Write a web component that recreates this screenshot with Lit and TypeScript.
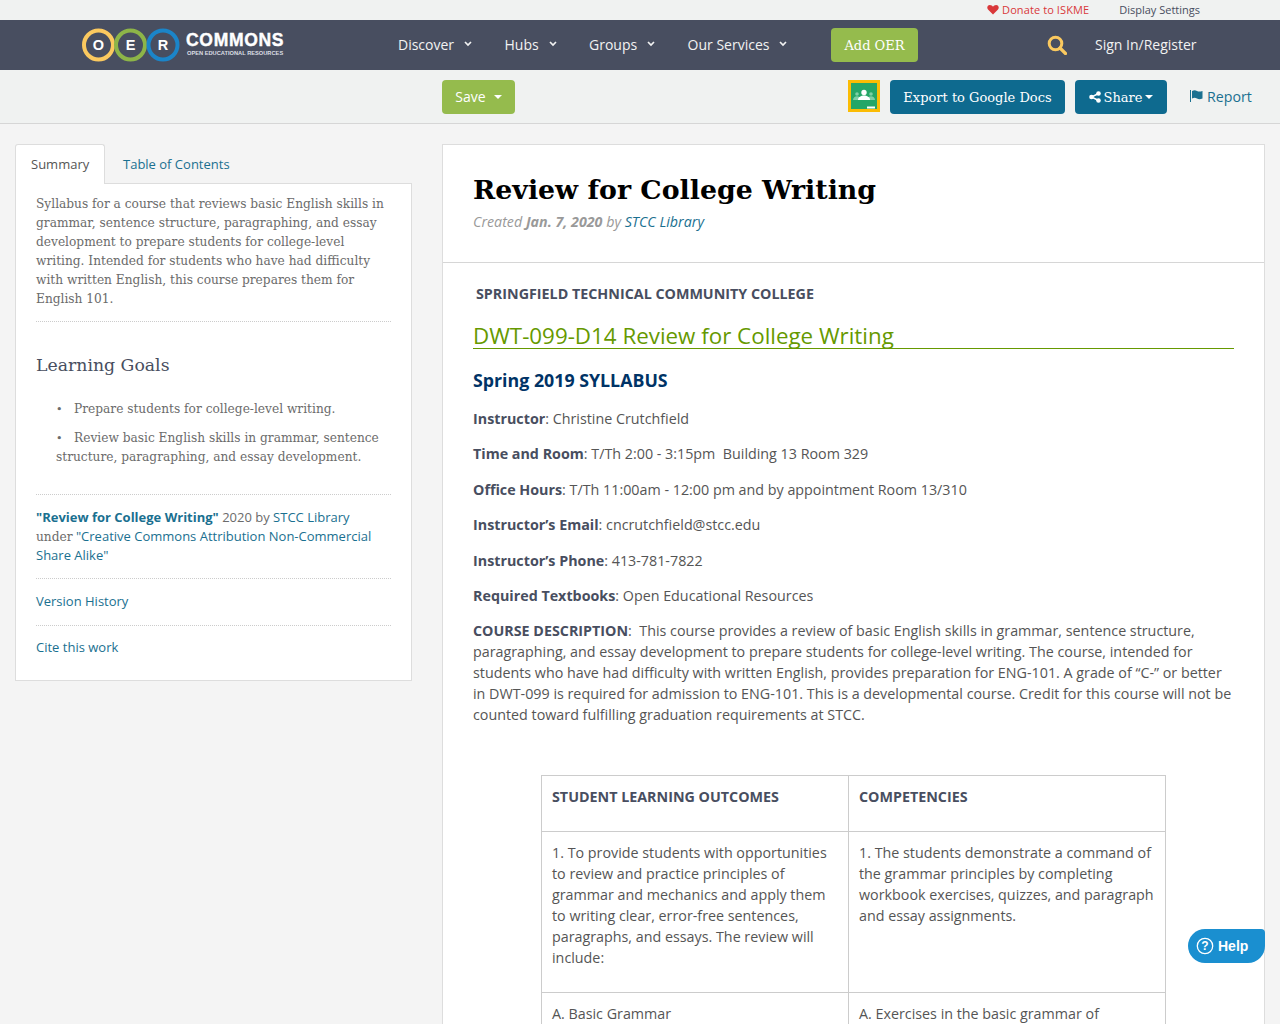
import { LitElement, css, html, svg } from "lit";
import { customElement } from "lit/decorators.js";

const chevron = html`<svg class="chev" width="8" height="6" viewBox="0 0 8 6"><path d="M1 1l3 3 3-3" fill="none" stroke="currentColor" stroke-width="1.7"/></svg>`;
const caret = html`<svg class="caret" width="8" height="4" viewBox="0 0 8 4"><path d="M0 0h8L4 4z" fill="currentColor"/></svg>`;

const ring = (cx: number, color: string, letter: string) => svg`
  <circle cx=${cx} cy="17" r="14.500" fill="none" stroke=${color} stroke-width="4"/>
  <text x=${cx} y="22" text-anchor="middle" class="ring-letter">${letter}</text>`;

@customElement("app-root")
export class AppRoot extends LitElement {
  static styles = css`
    :host {
      display: block;
      height: 1024px;
      overflow: hidden;
      position: relative;
      background: #f4f4f4;
      font-family: "Open Sans", sans-serif;
      font-size: 14px;
      line-height: 21px;
      color: #555;
    }
    a { color: #1a7090; text-decoration: none; }

    .util {
      height: 20px;
      box-sizing: border-box;
      padding: 0 80px 2px 0;
      background: #f0f2f1;
      display: flex;
      justify-content: flex-end;
      align-items: center;
      gap: 30px;
      font-size: 11px;
      color: #484e60;
    }
    .donate { color: #d9383a; display: flex; align-items: center; gap: 3px; letter-spacing: 0.1px; }

    .nav {
      height: 50px;
      background: #484e60;
      color: #f2f2f2;
      display: flex;
      align-items: center;
      padding-left: 82px;
    }
    .logo { display: flex; align-items: center; gap: 6px; width: 316px; }
    .ring-letter { font: bold 14.5px "Liberation Sans", sans-serif; fill: #fff; }
    .wordmark { display: flex; flex-direction: column; font-family: "Liberation Sans", sans-serif; font-weight: bold; color: #fff; }
    .wordmark b { font-size: 17.5px; line-height: 17px; letter-spacing: 0.7px; -webkit-text-stroke: 0.4px #fff; }
    .wordmark span { font-size: 5.7px; line-height: 9px; margin-left: 1px; white-space: nowrap; color: #dcdfe4; }
    .menu { display: flex; align-items: center; gap: 32.4px; width: 433px; padding-bottom: 2px; box-sizing: border-box; }
    .menu span { display: flex; align-items: center; gap: 10px; }
    .add {
      background: #95bb4d;
      color: #fff;
      border-radius: 4px;
      width: 87px;
      height: 34px;
      display: flex;
      align-items: center;
      justify-content: center;
      font-family: "DejaVu Serif", serif;
      font-size: 13px;
    }
    .search { margin-left: 129px; display: block; }
    .sign { margin-left: 28px; padding-bottom: 2px; }

    .toolbar {
      height: 54px;
      box-sizing: border-box;
      background: #f0f2f1;
      border-bottom: 1px solid #d6d6d6;
      display: flex;
      align-items: flex-start;
      padding: 10px 28px 0 442px;
    }
    .btn {
      height: 34px;
      border-radius: 4px;
      color: #fff;
      display: flex;
      align-items: center;
      justify-content: center;
      font-family: "DejaVu Serif", serif;
      font-size: 13px;
      white-space: nowrap;
    }
    .save { background: #95bb4d; width: 73px; gap: 8px; font-family: "Open Sans", sans-serif; font-size: 14px; padding-bottom: 2px; box-sizing: border-box; }
    .save .caret { margin-top: 2px; }
    .classroom { margin-left: auto; display: block; }
    .blue { background: #0e6a8f; }
    .export { width: 175px; margin-left: 10px; }
    .share { width: 92px; margin-left: 10px; gap: 3px; }
    .report { margin-left: 23px; height: 34px; padding-bottom: 2px; box-sizing: border-box; display: flex; align-items: center; gap: 3px; width: 62px; white-space: nowrap; font-size: 14.2px; }

    .page { display: flex; align-items: flex-start; gap: 30px; padding: 20px 15px; }
    aside { width: 397px; flex: none; font-size: 13px; line-height: 19px; }
    .tabs { display: flex; height: 40px; }
    .tab { height: 40px; display: flex; align-items: center; padding: 0 15px; box-sizing: border-box; margin-right: 3px; }
    .tab.on { background: #fff; border: 1px solid #ddd; border-bottom: 0; border-radius: 3px 3px 0 0; color: #555; width: 90px; position: relative; z-index: 1; }
    .panel { background: #fff; border: 1px solid #ddd; margin-top: -1px; padding: 11px 20px 23px; color: #6b6b6b; }
    .slab { font-family: "DejaVu Serif", serif; font-size: 12.2px; line-height: 19px; }
    .panel hr { border: 0; border-top: 1px dotted #ccc; margin: 0; }
    .desc { margin: 0 0 12px; }
    .panel h2 { font: 400 17.3px/24px "DejaVu Serif", serif; color: #484e60; margin: 31px 0 23px; }
    .panel ul { list-style: none; margin: 0 0 27px; padding: 0 0 0 20px; }
    .panel li { margin-bottom: 10px; }
    .panel li::before { content: "•"; display: inline-block; width: 18px; font-size: 11px; }
    .meta { margin: 13px 0 13px; }
    .meta .slab { line-height: 1; }
    .panel .link { margin: 13px 0 14px; }
    .panel .link:last-child { margin: 12px 0 0; }

    main { flex: 1; background: #fff; border: 1px solid #ddd; min-width: 0; }
    header { padding: 29px 30px 0; border-bottom: 1px solid #d6d6d6; height: 88px; }
    h1 { font: bold 26.8px/32px "DejaVu Serif", serif; color: #000; margin: 0; white-space: nowrap; }
    .created { font-style: italic; color: #999; margin-top: 5px; font-size: 14.25px; }
    .created b { color: #999; }
    .content { padding: 20px 30px 0; color: #555; font-size: 14.3px; }
    .content p { margin: 0 0 14.4px; }
    .content b { color: #484e60; }
    .college { padding-left: 3px; margin-bottom: 20px !important; }
    .content h2 { font-size: 22.35px; line-height: 24px; font-weight: 400; color: #669900; border-bottom: 1px solid #669900; margin: 0 0 19px; height: 24px; }
    .content h3 { font-size: 17.8px; line-height: 24px; font-weight: 700; color: #003366; margin: 0 0 16px; }
    .spacer { height: 35.4px; }
    table { border-collapse: collapse; width: 625px; margin-left: 68px; table-layout: fixed; }
    td { border: 1px solid #ccc; padding: 10px; vertical-align: top; }
    td p { margin-bottom: 14px !important; }
    td:first-child { width: 286px; }

    .help {
      position: absolute;
      left: 1188px;
      top: 929px;
      width: 77px;
      height: 34px;
      box-sizing: border-box;
      background: #1a8fd0;
      border-radius: 17px 4px 17px 17px;
      color: #fff;
      display: flex;
      align-items: center;
      gap: 3px;
      padding: 0 0 1px 7px;
      font: bold 14px "Liberation Sans", sans-serif;
    }
  `;

  render() {
    return html`
      <div class="util">
        <span class="donate">
          <svg width="12" height="11" viewBox="0 0 12 11"><path d="M6 10.500L1 5.600C-.4 4 .2 1 2.900 1 4.300 1 5.300 1.800 6 2.800 6.700 1.800 7.700 1 9.100 1c2.700 0 3.300 3 1.900 4.600z" fill="#d9383a"/></svg>
          Donate to ISKME
        </span>
        <span>Display Settings</span>
      </div>

      <div class="nav">
        <div class="logo">
          <svg width="98" height="34" viewBox="0 0 98 34">
            ${ring(16.5, "#fbc95f", "O")}${ring(48.5, "#8db548", "E")}${ring(81, "#1b85c9", "R")}
          </svg>
          <div class="wordmark"><b>COMMONS</b><span>OPEN EDUCATIONAL RESOURCES</span></div>
        </div>
        <div class="menu">
          <span>Discover ${chevron}</span>
          <span>Hubs ${chevron}</span>
          <span>Groups ${chevron}</span>
          <span>Our Services ${chevron}</span>
        </div>
        <div class="add">Add OER</div>
        <svg class="search" width="20" height="20" viewBox="0 0 20 20"><circle cx="8.500" cy="8.500" r="6.300" fill="none" stroke="#fbc95f" stroke-width="3"/><path d="M13 13l5.500 5.500" stroke="#fbc95f" stroke-width="3.200" stroke-linecap="round"/></svg>
        <span class="sign">Sign In/Register</span>
      </div>

      <div class="toolbar">
        <div class="btn save">Save ${caret}</div>
        <svg class="classroom" width="32" height="32" viewBox="0 0 32 32">
          <rect width="32" height="32" fill="#fbbc04"/>
          <rect x="3" y="3" width="26" height="26" fill="#25a667"/>
          <circle cx="9" cy="14" r="1.800" fill="#7fcfa6"/><circle cx="23" cy="14" r="1.800" fill="#7fcfa6"/>
          <path d="M5 20c0-2.500 2-3.800 4-3.800s4 1.300 4 3.800zM19 20c0-2.500 2-3.800 4-3.800s4 1.300 4 3.800z" fill="#7fcfa6"/>
          <circle cx="16" cy="12.500" r="2.700" fill="#fff"/>
          <path d="M10 20c0-3 3-4.500 6-4.500s6 1.500 6 4.500z" fill="#fff"/>
          <rect x="19" y="26.500" width="8" height="2" fill="#fff"/>
        </svg>
        <div class="btn blue export">Export to Google Docs</div>
        <div class="btn blue share">
          <svg width="12" height="12" viewBox="0 0 12 12"><path d="M9.500 2.500L2.500 6l7 3.500" fill="none" stroke="#fff" stroke-width="1.400"/><circle cx="9.500" cy="2.500" r="2.300" fill="#fff"/><circle cx="2.500" cy="6" r="2.300" fill="#fff"/><circle cx="9.500" cy="9.500" r="2.300" fill="#fff"/></svg>
          Share ${caret}
        </div>
        <a class="report">
          <svg width="14" height="12" viewBox="0 0 14 12"><path d="M.5 0v12" stroke="#1a7090" stroke-width="1"/><path d="M2 1c2-1 3.500-.8 5 0s3 .8 5.500 0v7.500c-2.500 1-4 .8-5.500 0s-3-1-5 0z" fill="#1a7090"/></svg>
          Report
        </a>
      </div>

      <div class="page">
        <aside>
          <div class="tabs">
            <div class="tab on">Summary</div>
            <a class="tab">Table of Contents</a>
          </div>
          <div class="panel">
            <p class="desc slab">Syllabus for a course that reviews basic English skills in grammar, sentence structure, paragraphing, and essay development to prepare students for college-level writing. Intended for students who have had difficulty with written English, this course prepares them for English 101.</p>
            <hr />
            <h2>Learning Goals</h2>
            <ul class="slab">
              <li>Prepare students for college-level writing.</li>
              <li>Review basic English skills in grammar, sentence structure, paragraphing, and essay development.</li>
            </ul>
            <hr />
            <p class="meta"><a><b>"Review for College Writing"</b></a> 2020 by <a>STCC Library</a><br /><span class="slab">under</span> <a>"Creative Commons Attribution Non-Commercial Share Alike"</a></p>
            <hr />
            <p class="link"><a>Version History</a></p>
            <hr />
            <p class="link"><a>Cite this work</a></p>
          </div>
        </aside>

        <main>
          <header>
            <h1>Review for College Writing</h1>
            <div class="created">Created <b>Jan. 7, 2020</b> by <a>STCC Library</a></div>
          </header>
          <div class="content">
            <p class="college"><b>SPRINGFIELD TECHNICAL COMMUNITY COLLEGE</b></p>
            <h2>DWT-099-D14 Review for College Writing</h2>
            <h3>Spring 2019 SYLLABUS</h3>
            <p><b>Instructor</b>: Christine Crutchfield</p>
            <p><b>Time and Room</b>: T/Th 2:00 - 3:15pm&nbsp; Building 13 Room 329</p>
            <p><b>Office Hours</b>: T/Th 11:00am - 12:00 pm and by appointment Room 13/310</p>
            <p><b>Instructor’s Email</b>: cncrutchfield@stcc.edu</p>
            <p><b>Instructor’s Phone</b>: 413-781-7822</p>
            <p><b>Required Textbooks</b>: Open Educational Resources</p>
            <p><b>COURSE DESCRIPTION</b>:&nbsp; This course provides a review of basic English skills in grammar, sentence structure, paragraphing, and essay development to prepare students for college-level writing. The course, intended for students who have had difficulty with written English, provides preparation for ENG-101. A grade of “C-” or better in DWT-099 is required for admission to ENG-101. This is a developmental course. Credit for this course will not be counted toward fulfilling graduation requirements at STCC.</p>
            <div class="spacer"></div>
            <table>
              <tr>
                <td><p><b>STUDENT LEARNING OUTCOMES</b></p></td>
                <td><p><b>COMPETENCIES</b></p></td>
              </tr>
              <tr>
                <td><p>1. To provide students with opportunities to review and practice principles of grammar and mechanics and apply them to writing clear, error-free sentences, paragraphs, and essays. The review will include:</p></td>
                <td><p>1. The students demonstrate a command of the grammar principles by completing workbook exercises, quizzes, and paragraph and essay assignments.</p></td>
              </tr>
              <tr>
                <td><p>A. Basic Grammar</p></td>
                <td><p>A. Exercises in the basic grammar of</p></td>
              </tr>
            </table>
          </div>
        </main>
      </div>

      <div class="help">
        <svg width="20" height="20" viewBox="0 0 20 20"><circle cx="10" cy="10" r="7.700" fill="none" stroke="#fff" stroke-width="1.300"/><text x="10" y="14.200" text-anchor="middle" fill="#fff" font-size="12" font-family="Liberation Sans" font-weight="bold">?</text></svg>
        Help
      </div>
    `;
  }
}
